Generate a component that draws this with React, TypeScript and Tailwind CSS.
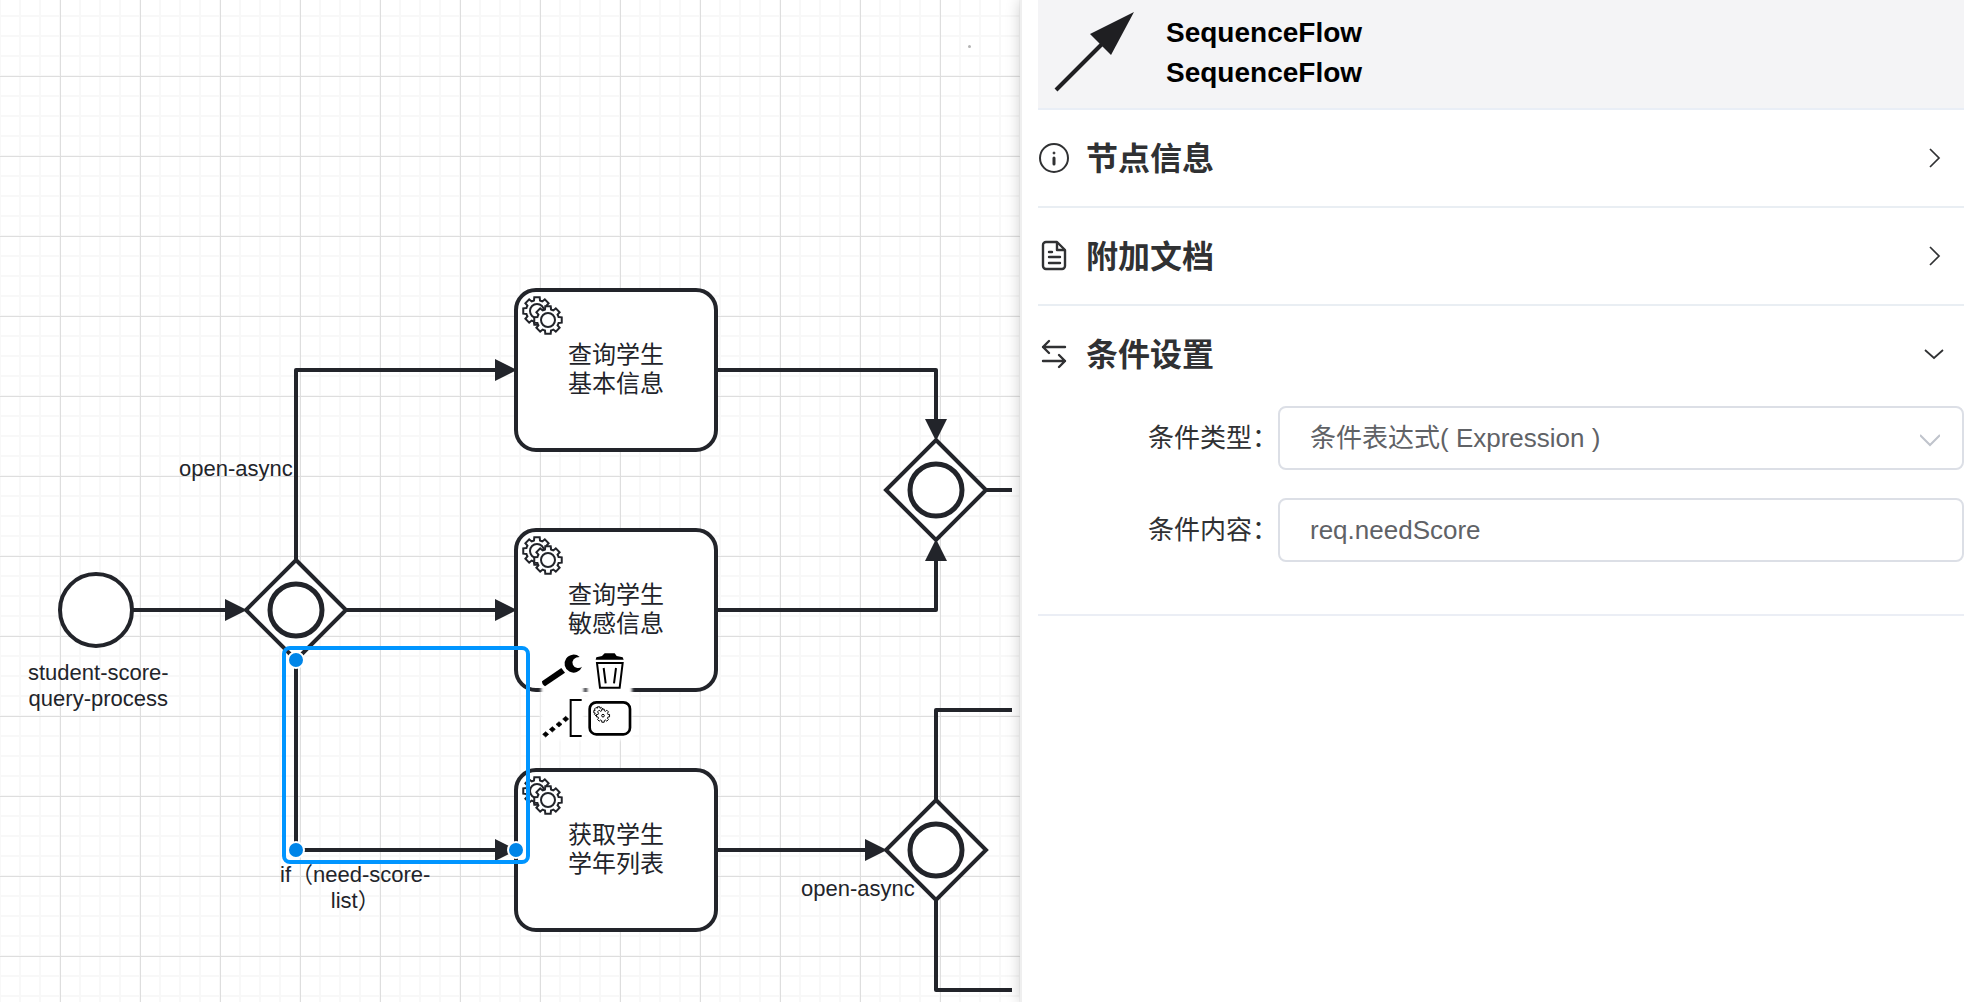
import React, { useState } from "react";

const INK = "#22242a";

function gearPath(cx: number, cy: number, outer: number, root: number, half: number, turn = 0) {
  const point = (r: number, a: number) =>
    `${(cx + r * Math.cos(a)).toFixed(2)} ${(cy + r * Math.sin(a)).toFixed(2)}`;
  let d = "";
  for (let i = 0; i < 8; i++) {
    const a = (i * Math.PI) / 4 + turn;
    const ro = Math.asin(half / root);
    const oo = Math.asin((half * 0.9) / outer);
    d += i === 0 ? `M${point(root, a - ro)}` : `A${root} ${root} 0 0 1 ${point(root, a - ro)}`;
    d += `L${point(outer, a - oo)}L${point(outer, a + oo)}L${point(root, a + ro)}`;
  }
  return `${d}A${root} ${root} 0 0 1 ${point(root, -Math.asin(half / root) + turn)}Z`;
}

function ServiceGears() {
  return (
    <svg viewBox="0 0 48 48" className="absolute left-0 top-0 size-12" fill="white" stroke={INK} strokeWidth="2">
      <path d={gearPath(19, 19, 14, 11, 3)} />
      <circle cx="19" cy="19" r="7" />
      <path d={gearPath(30, 28, 14, 11, 3)} />
      <circle cx="30" cy="28" r="7" />
    </svg>
  );
}

function TaskNode({ lines, place }: { lines: string[]; place: string }) {
  return (
    <div
      className={`absolute left-[514px] flex h-[164px] w-[204px] items-center justify-center rounded-[22px] border-4 border-[#22242a] bg-white pb-[2px] text-center text-[24px] leading-[29px] text-[#22242a] ${place}`}
    >
      <ServiceGears />
      <div>
        {lines.map((line) => (
          <div key={line}>{line}</div>
        ))}
      </div>
    </div>
  );
}

function Label({ lines, place }: { lines: string[]; place: string }) {
  return (
    <div className={`absolute whitespace-nowrap text-center text-[22px] leading-[26px] text-[#22242a] ${place}`}>
      {lines.map((line) => (
        <div key={line}>{line}</div>
      ))}
    </div>
  );
}

function Gateway({ x, y }: { x: number; y: number }) {
  return (
    <g fill="white" stroke={INK}>
      <path d={`M${x} ${y - 50}l50 50l-50 50l-50 -50z`} strokeWidth="4" />
      <circle cx={x} cy={y} r="26" strokeWidth="5" />
    </g>
  );
}

function Connections() {
  return (
    <svg className="absolute left-0 top-0 h-[1002px] w-[1020px]" fill="none">
      <g stroke={INK} strokeWidth="4" strokeLinejoin="round">
        <path d="M132 610H226" />
        <path d="M296 560V370H496" />
        <path d="M346 610H496" />
        <path d="M296 660V850H496" />
        <path d="M716 370H936V420" />
        <path d="M716 610H936V560" />
        <path d="M986 490H1012" />
        <path d="M716 850H866" />
        <path d="M936 800V710H1012" />
        <path d="M936 900V990H1012" />
      </g>
      <circle cx="96" cy="610" r="36" fill="white" stroke={INK} strokeWidth="4" />
      <Gateway x={296} y={610} />
      <Gateway x={936} y={490} />
      <Gateway x={936} y={850} />
      <g fill={INK}>
        <path d="M225 599L247 610L225 621Z" />
        <path d="M495 359L517 370L495 381Z" />
        <path d="M495 599L517 610L495 621Z" />
        <path d="M495 839L517 850L495 861Z" />
        <path d="M865 839L887 850L865 861Z" />
        <path d="M925 419L936 441L947 419Z" />
        <path d="M925 561L936 539L947 561Z" />
      </g>
    </svg>
  );
}

function Selection() {
  return (
    <svg className="absolute left-0 top-0 h-[1002px] w-[1020px]" fill="none">
      <defs>
        <filter id="soft" x="-20%" y="-20%" width="140%" height="140%">
          <feGaussianBlur stdDeviation="1.5" />
        </filter>
      </defs>
      <g fill="#0085e8" stroke="white" strokeWidth="2">
        <circle cx="296" cy="660" r="8" />
        <circle cx="296" cy="850" r="8" />
        <circle cx="516" cy="850" r="8" />
      </g>
      <rect x="284" y="648" width="244" height="214" rx="6" stroke="#0095ff" strokeWidth="4" />
      <g fill="white" filter="url(#soft)">
        <rect x="541" y="648" width="43" height="46" />
        <rect x="587" y="648" width="45" height="46" />
        <rect x="541" y="694" width="43" height="46" />
        <rect x="587" y="694" width="45" height="46" />
      </g>
      <svg x="534" y="644" width="106" height="100" viewBox="0 0 318 300">
        <g fill="black">
          <path d="M24 112L82 72L93 86L33 127Q24 122 24 112Z" />
          <path d="M137 39A27 27 0 1 0 144 68Q138 73 130 72A16 16 0 0 1 119 46Q126 39 137 39Z" />
          <path d="M185 47L187 40L204 36L212 28H242L248 36L266 40L269 47Z" />
          <path d="M26 271l9 -8l9 8l-9 8zM46 256l9 -8l9 8l-9 8zM66 241l9 -8l9 8l-9 8zM86 225l9 -8l9 8l-9 8z" stroke="black" strokeWidth="2" />
        </g>
        <g fill="none" stroke="black">
          <path d="M189 57H266L257 131H198Z" strokeWidth="6" />
          <path d="M209 72L215 118M246 72L240 118" strokeWidth="6" />
          <path d="M143 168H110V276H143" strokeWidth="6" />
        </g>
        <rect x="167" y="175" width="121" height="96" rx="20" fill="white" stroke="black" strokeWidth="8" />
        <g fill="white" stroke="black" strokeWidth="3">
          <path d={gearPath(194, 203, 15, 11, 4)} />
          <path d={gearPath(207, 215, 20, 15, 4)} />
          <circle cx="207" cy="215" r="4" />
        </g>
      </svg>
    </svg>
  );
}

function Canvas() {
  return (
    <main className="relative overflow-hidden bg-white bg-[linear-gradient(to_right,#dedede_1px,transparent_1px),linear-gradient(to_bottom,#dedede_1px,transparent_1px),linear-gradient(to_right,#f8f8f8_2px,transparent_2px),linear-gradient(to_bottom,#f8f8f8_2px,transparent_2px)] bg-[length:80px_80px,80px_80px,20px_20px,20px_20px] bg-[position:60px_0px,0px_76px,19px_0px,0px_15px]">
      <Connections />
      <TaskNode lines={["查询学生", "基本信息"]} place="top-[288px]" />
      <TaskNode lines={["查询学生", "敏感信息"]} place="top-[528px]" />
      <TaskNode lines={["获取学生", "学年列表"]} place="top-[768px]" />
      <Label lines={["open-async"]} place="left-[179px] top-[456px]" />
      <Label lines={["student-score-", "query-process"]} place="left-[28px] top-[660px]" />
      <Label lines={["if（need-score-", "list）"]} place="left-[280px] top-[862px]" />
      <Label lines={["open-async"]} place="left-[801px] top-[876px]" />
      <Selection />
      <span className="absolute left-[968px] top-[45px] size-[3px] rounded-full bg-[#b4b4b4]" />
    </main>
  );
}

function InfoIcon() {
  return (
    <svg viewBox="0 0 32 32" className="size-8" fill="none" stroke="currentColor" strokeWidth="2">
      <circle cx="16" cy="16" r="14" />
      <path d="M16 16V22" strokeWidth="3" strokeLinecap="round" />
      <circle cx="16" cy="11" r="1" strokeWidth="1" fill="currentColor" />
    </svg>
  );
}

function DocumentIcon() {
  return (
    <svg viewBox="0 0 32 32" className="size-8" fill="none" stroke="currentColor" strokeWidth="2.4" strokeLinecap="round" strokeLinejoin="round">
      <path d="M8 2H19L27 10V26a3 3 0 0 1-3 3H8a3 3 0 0 1-3-3V5a3 3 0 0 1 3-3Z" />
      <path d="M19 3V10H26M11 12H14M11 17H22M11 23H22" />
    </svg>
  );
}

function SwapIcon() {
  return (
    <svg viewBox="0 0 32 32" className="size-8" fill="none" stroke="currentColor" strokeWidth="2.4" strokeLinecap="round" strokeLinejoin="round">
      <path d="M27 9H5M11 3L5 9L11 15M5 23H27M21 17L27 23L21 29" />
    </svg>
  );
}

function Section({
  title,
  icon,
  open = false,
  last = false,
  children,
}: {
  title: string;
  icon: React.ReactNode;
  open?: boolean;
  last?: boolean;
  children?: React.ReactNode;
}) {
  const [expanded, setExpanded] = useState(open);
  return (
    <section className={last ? "border-b-2 border-[#ebeef5]" : "border-b-2 border-[#e9eef3]"}>
      <h2>
        <button
          type="button"
          aria-expanded={expanded}
          onClick={() => setExpanded(!expanded)}
          className="flex h-24 w-full items-center gap-4 pr-5 text-left text-[32px] font-bold leading-10 text-[#303133]"
        >
          {icon}
          <span className="flex-1 pt-[2px]">{title}</span>
          <svg viewBox="0 0 20 20" className="size-5" fill="none" stroke="currentColor" strokeWidth="1.7">
            {expanded ? <path d="M1 6L10 14L19 6" /> : <path d="M6 1L15 10L6 19" />}
          </svg>
        </button>
      </h2>
      {expanded && children}
    </section>
  );
}

function Panel() {
  const [type, setType] = useState("expression");
  const [content, setContent] = useState("req.needScore");
  return (
    <aside className="relative border-l-2 border-[#efefef] bg-white pl-4 shadow-[0_0_14px_rgba(0,0,0,0.2)]">
      <header className="flex h-[110px] items-start border-b-2 border-[#e9eef6] bg-[#f4f4f6]">
        <svg viewBox="0 0 128 104" className="h-[104px] w-32 shrink-0" fill="#1f1f22">
          <path d="M18 90L64 44" stroke="#1f1f22" strokeWidth="4" />
          <path d="M96 12L52 34L73 55Z" />
        </svg>
        <div className="pt-[13px] text-[28px] font-bold leading-10 text-black">
          <div>SequenceFlow</div>
          <div>SequenceFlow</div>
        </div>
      </header>
      <Section title="节点信息" icon={<InfoIcon />} />
      <Section title="附加文档" icon={<DocumentIcon />} />
      <Section title="条件设置" icon={<SwapIcon />} open last>
        <form className="flex flex-col gap-7 pb-[52px] pt-1 text-[26px]">
          <div className="flex items-center">
            <label htmlFor="condition-type" className="w-60 shrink-0 text-right text-[#303133]">
              条件类型：
            </label>
            <div className="relative flex-1">
              <select
                id="condition-type"
                value={type}
                onChange={(e) => setType(e.target.value)}
                className="h-16 w-full appearance-none rounded-lg border-2 border-[#dcdfe6] bg-white px-[30px] text-[#606266] outline-none"
              >
                <option value="expression">条件表达式( Expression )</option>
              </select>
              <svg viewBox="0 0 20 20" className="pointer-events-none absolute right-6 top-6 size-5" fill="none" stroke="#c0c4cc" strokeWidth="2">
                <path d="M0 5L10 15L20 5" />
              </svg>
            </div>
          </div>
          <div className="flex items-center">
            <label htmlFor="condition-content" className="w-60 shrink-0 text-right text-[#303133]">
              条件内容：
            </label>
            <input
              id="condition-content"
              type="text"
              value={content}
              onChange={(e) => setContent(e.target.value)}
              className="h-16 min-w-0 flex-1 rounded-lg border-2 border-[#dcdfe6] bg-white px-[30px] text-[#606266] outline-none"
            />
          </div>
        </form>
      </Section>
    </aside>
  );
}

export default function App() {
  return (
    <div className="grid min-h-screen grid-cols-[1020fr_944fr] overflow-hidden bg-white font-['Liberation_Sans','Noto_Sans_CJK_SC',sans-serif]">
      <Canvas />
      <Panel />
    </div>
  );
}
